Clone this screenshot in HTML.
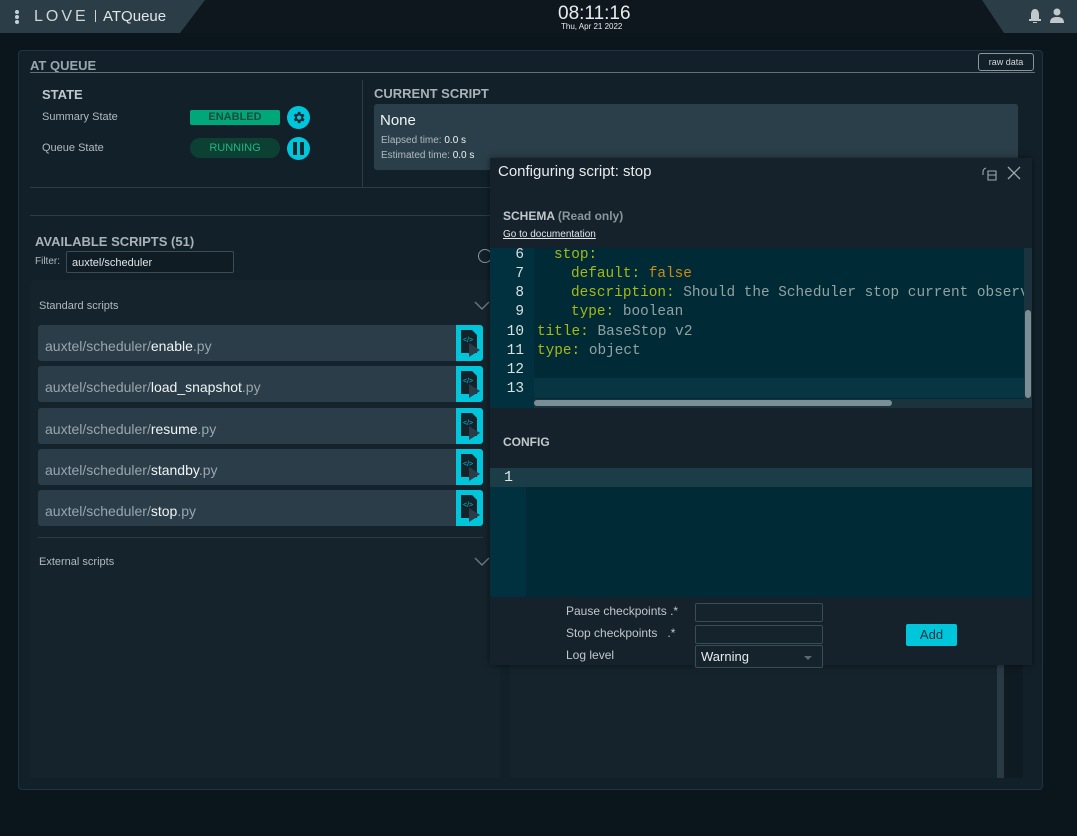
<!DOCTYPE html>
<html><head><style>
*{margin:0;padding:0;box-sizing:border-box}
body{width:1077px;height:836px;background:#0b161c;font-family:"Liberation Sans",sans-serif;color:#c8d0d4;position:relative;overflow:hidden}
.a{position:absolute}
.mono{font-family:"Liberation Mono",monospace}
.row{position:absolute;left:38px;width:445px;height:36px;background:#2a3d49;border-radius:3px;font-size:14px;color:#9aa6ad;padding:13px 0 0 7px}
.row b{font-weight:normal;color:#f0f4f5}
.btn{position:absolute;right:0;top:0;width:27px;height:36px;background:#00c6dc;border-radius:0 3px 3px 0}
.ln{position:absolute;left:0;width:34px;text-align:right;font-size:14.4px;color:#d8e0e0}
.cl{position:absolute;left:46px;font-size:14.4px;white-space:pre;color:#93a1a1}
.k{color:#a8b814}.f{color:#cb8c10}
</style></head><body>
<div class="a" style="left:0;top:0;width:1077px;height:33px;background:#0d171d"></div>
<svg class="a" style="left:0;top:0" width="210" height="34"><path d="M0 0H205L180 33H0Z" fill="#2b3d47"/></svg>
<svg class="a" style="left:982px;top:0" width="95" height="34"><path d="M0 0H95V33H22Z" fill="#2b3d47"/></svg>
<div class="a" style="left:15px;top:10px;width:4px;height:4px;background:#c8d0d4;border-radius:2px;box-shadow:0 5px 0 #c8d0d4,0 10px 0 #c8d0d4"></div>
<div class="a" style="left:34px;top:8px;font-size:16px;letter-spacing:3px;color:#d0d6d8">LOVE</div>
<div class="a" style="left:95px;top:10px;width:1px;height:12px;background:#d0d6d8"></div>
<div class="a" style="left:103px;top:8px;font-size:15px;color:#e0e6e8">ATQueue</div>
<div class="a" style="left:558px;top:3px;font-size:19px;color:#e8ecee">08:11:16</div>
<div class="a" style="left:561px;top:22px;font-size:8px;color:#e8ecee">Thu, Apr 21 2022</div>
<svg class="a" style="left:1028px;top:8px" width="40" height="16"><path d="M7 1C4 1 3 4 3 7V11H1V13H13V11H11V7C11 4 10 1 7 1Z M5 14H9V15H5Z" fill="#c0c8cc"/><circle cx="29" cy="4" r="3.5" fill="#c0c8cc"/><path d="M22 15C22 10 25 9 29 9S36 10 36 15Z" fill="#c0c8cc"/></svg>

<div class="a" style="left:18px;top:50px;width:1025px;height:740px;background:#12202a;border:1px solid #1e3440;border-radius:4px"></div>
<div class="a" style="left:30px;top:58px;font-size:13px;font-weight:bold;color:#9aa6ad">AT QUEUE</div>
<div class="a" style="left:30px;top:72px;width:1005px;height:1px;background:#5f727c;border-radius:4px"></div>
<div class="a" style="left:978px;top:53px;width:56px;height:18px;border:1px solid #8a969c;border-radius:3px;font-size:9px;color:#d0d6d8;text-align:center;line-height:16px">raw data</div>

<div class="a" style="left:42px;top:87px;font-size:13px;font-weight:bold;color:#c0c8cc">STATE</div>
<div class="a" style="left:42px;top:111px;font-size:11px;color:#b0bac0">Summary State</div>
<div class="a" style="left:42px;top:142px;font-size:11px;color:#b0bac0">Queue State</div>
<div class="a" style="left:190px;top:110px;width:90px;height:15px;background:#00a879;border-radius:2px;font-size:11px;font-weight:bold;color:#1c4a3c;text-align:center;line-height:15px">ENABLED</div>
<div class="a" style="left:190px;top:138px;width:90px;height:20px;background:#0c4033;border-radius:10px;font-size:11px;color:#1fb583;text-align:center;line-height:20px">RUNNING</div>
<div class="a" style="left:287px;top:106px;width:23px;height:23px;background:#00c6dc;border-radius:50%"></div>
<svg class="a" style="left:291px;top:110px" width="15" height="15" viewBox="0 0 24 24"><path fill="#0e2a33" d="M19.4 13a7.5 7.5 0 000-2l2.1-1.6-2-3.5-2.5 1a7 7 0 00-1.7-1L15 3h-4l-.4 2.7a7 7 0 00-1.7 1l-2.5-1-2 3.5L6.6 11a7.5 7.5 0 000 2l-2.1 1.6 2 3.5 2.5-1a7 7 0 001.7 1L11 21h4l.4-2.7a7 7 0 001.7-1l2.5 1 2-3.5zM13 15.5a3.5 3.5 0 110-7 3.5 3.5 0 010 7z"/></svg>
<div class="a" style="left:287px;top:137px;width:23px;height:23px;background:#00c6dc;border-radius:50%"></div>
<div class="a" style="left:293px;top:142px;width:4px;height:13px;background:#0e2a33"></div>
<div class="a" style="left:300px;top:142px;width:4px;height:13px;background:#0e2a33"></div>
<div class="a" style="left:362px;top:80px;width:1px;height:107px;background:#2a3c46"></div>
<div class="a" style="left:30px;top:187px;width:470px;height:1px;background:#2a3c46"></div>
<div class="a" style="left:30px;top:215px;width:470px;height:1px;background:#2a3c46"></div>

<div class="a" style="left:374px;top:86px;font-size:13px;font-weight:bold;color:#a8b2b8">CURRENT SCRIPT</div>
<div class="a" style="left:374px;top:104px;width:644px;height:66px;background:#2b3f4b;border-radius:3px"></div>
<div class="a" style="left:380px;top:112px;font-size:15px;color:#f0f4f5">None</div>
<div class="a" style="left:381px;top:135px;font-size:10px;color:#b0bac0">Elapsed time: <span style="color:#f0f4f5">0.0 s</span></div>
<div class="a" style="left:381px;top:150px;font-size:10px;color:#b0bac0">Estimated time: <span style="color:#f0f4f5">0.0 s</span></div>

<div class="a" style="left:35px;top:234px;font-size:13px;font-weight:bold;color:#a8b2b8">AVAILABLE SCRIPTS (51)</div>
<div class="a" style="left:35px;top:256px;font-size:10px;color:#b0bac0">Filter:</div>
<div class="a" style="left:66px;top:251px;width:168px;height:22px;border:1px solid #3a4c56;border-radius:2px;background:#0f1c24;font-size:11px;color:#e0e6e8;padding:5px 5px">auxtel/scheduler</div>
<div class="a" style="left:478px;top:249px;width:14px;height:14px;border:1.5px solid #8a969c;border-radius:50%"></div>

<div class="a" style="left:30px;top:280px;width:470px;height:498px;background:#15232c;border-radius:3px"></div>
<div class="a" style="left:39px;top:300px;font-size:11px;color:#b0bac0">Standard scripts</div>
<svg class="a" style="left:474px;top:301px" width="16" height="10"><path d="M1 1L8 8L15 1" stroke="#6f7e86" fill="none" stroke-width="1.3"/></svg>
<div class="row" style="top:325px">auxtel/scheduler/<b>enable</b>.py<div class="btn"></div></div>
<div class="row" style="top:366px">auxtel/scheduler/<b>load_snapshot</b>.py<div class="btn"></div></div>
<div class="row" style="top:408px">auxtel/scheduler/<b>resume</b>.py<div class="btn"></div></div>
<div class="row" style="top:449px">auxtel/scheduler/<b>standby</b>.py<div class="btn"></div></div>
<div class="row" style="top:490px">auxtel/scheduler/<b>stop</b>.py<div class="btn"></div></div>
<svg class="a" style="left:456px;top:325px" width="27" height="210">
<g id="ic"><path d="M5 5H16L21 10V28H5Z" fill="#13232c"/><text x="7" y="17" font-size="7" fill="#00c6dc" font-family="Liberation Sans">&lt;/&gt;</text><path d="M13 18L24 25L13 32Z" fill="#2a3d49"/></g>
<use href="#ic" y="41"/><use href="#ic" y="83"/><use href="#ic" y="124"/><use href="#ic" y="165"/>
</svg>
<div class="a" style="left:38px;top:537px;width:445px;height:1px;background:#2a3c46"></div>
<div class="a" style="left:39px;top:556px;font-size:11px;color:#b0bac0">External scripts</div>
<svg class="a" style="left:474px;top:557px" width="16" height="10"><path d="M1 1L8 8L15 1" stroke="#6f7e86" fill="none" stroke-width="1.3"/></svg>

<div class="a" style="left:510px;top:665px;width:513px;height:113px;background:#15232c"></div>
<div class="a" style="left:997px;top:665px;width:7px;height:113px;background:#2a3a44"></div>
<div class="a" style="left:1004px;top:665px;width:19px;height:113px;background:#0f1b22"></div>

<div class="a" style="left:490px;top:158px;width:542px;height:507px;background:#15222b;box-shadow:0 0 6px rgba(0,0,0,.5)"></div>
<div class="a" style="left:498px;top:163px;font-size:15px;color:#e8ecee">Configuring script: stop</div>
<svg class="a" style="left:982px;top:165px" width="40" height="16"><path d="M4 3A4 4 0 001 7V10M6 6H14V15H6ZM6 10H14" stroke="#a0aab0" fill="none" stroke-width="1.1"/><path d="M26 2L38 14M38 2L26 14" stroke="#a0aab0" stroke-width="1.3"/></svg>
<div class="a" style="left:503px;top:209px;font-size:12px;font-weight:bold;color:#c0c8cc">SCHEMA <span style="color:#8a969c">(Read only)</span></div>
<div class="a" style="left:503px;top:229px;font-size:10px;color:#e0e6e8;text-decoration:underline">Go to documentation</div>

<div class="a mono" style="left:490px;top:248px;width:542px;height:160px;background:#002b36;overflow:hidden">
<div class="a" style="left:0;top:0;width:44px;height:160px;background:#01313f"></div>
<div class="a" style="left:44px;top:130px;width:490px;height:20px;background:#073642"></div>
<div class="ln" style="top:-1px">6</div><div class="ln" style="top:18px">7</div><div class="ln" style="top:37px">8</div><div class="ln" style="top:56px">9</div><div class="ln" style="top:76px">10</div><div class="ln" style="top:95px">11</div><div class="ln" style="top:114px">12</div><div class="ln" style="top:133px">13</div>
<div class="cl" style="top:-1px;left:64px"><span class="k">stop:</span></div>
<div class="cl" style="top:18px;left:81px"><span class="k">default:</span> <span class="f">false</span></div>
<div class="cl" style="top:37px;left:81px"><span class="k">description:</span> Should the Scheduler stop current observ</div>
<div class="cl" style="top:56px;left:81px"><span class="k">type:</span> boolean</div>
<div class="cl" style="top:76px;left:47px"><span class="k">title:</span> BaseStop v2</div>
<div class="cl" style="top:95px;left:47px"><span class="k">type:</span> object</div>
<div class="a" style="left:44px;top:151px;width:490px;height:9px;background:#1b333d"></div>
<div class="a" style="left:44px;top:152px;width:358px;height:6px;background:#7a8e96;border-radius:3px"></div>
<div class="a" style="left:534px;top:0;width:8px;height:160px;background:#1b333d"></div>
<div class="a" style="left:535px;top:62px;width:6px;height:88px;background:#7a8e96;border-radius:3px"></div>
</div>

<div class="a" style="left:503px;top:435px;font-size:12px;font-weight:bold;color:#c0c8cc">CONFIG</div>
<div class="a mono" style="left:490px;top:468px;width:542px;height:129px;background:#002b36">
<div class="a" style="left:0;top:0;width:36px;height:129px;background:#01313f"></div>
<div class="a" style="left:0;top:0;width:542px;height:19px;background:#1a3d47"></div>
<div class="a" style="left:14px;top:1px;font-size:15px;color:#e0e6e8">1</div>
</div>

<div class="a" style="left:566px;top:604px;font-size:12px;color:#c0c8cc">Pause checkpoints .*</div>
<div class="a" style="left:566px;top:626px;font-size:12px;color:#c0c8cc">Stop checkpoints &nbsp;&nbsp;.*</div>
<div class="a" style="left:566px;top:648px;font-size:12px;color:#c0c8cc">Log level</div>
<div class="a" style="left:695px;top:603px;width:128px;height:19px;border:1px solid #3a4c56;border-radius:2px;background:#14232c"></div>
<div class="a" style="left:695px;top:625px;width:128px;height:19px;border:1px solid #3a4c56;border-radius:2px;background:#14232c"></div>
<div class="a" style="left:695px;top:645px;width:128px;height:23px;border:1px solid #3a4c56;border-radius:2px;background:#14232c;font-size:13px;color:#e8ecee;padding:3px 5px">Warning</div>
<svg class="a" style="left:804px;top:656px" width="8" height="5"><path d="M0 0H8L4 4Z" fill="#5a6a72"/></svg>
<div class="a" style="left:906px;top:624px;width:51px;height:22px;background:#00c6dc;border-radius:2px;font-size:13px;color:#12343f;text-align:center;line-height:22px">Add</div>
</body></html>
